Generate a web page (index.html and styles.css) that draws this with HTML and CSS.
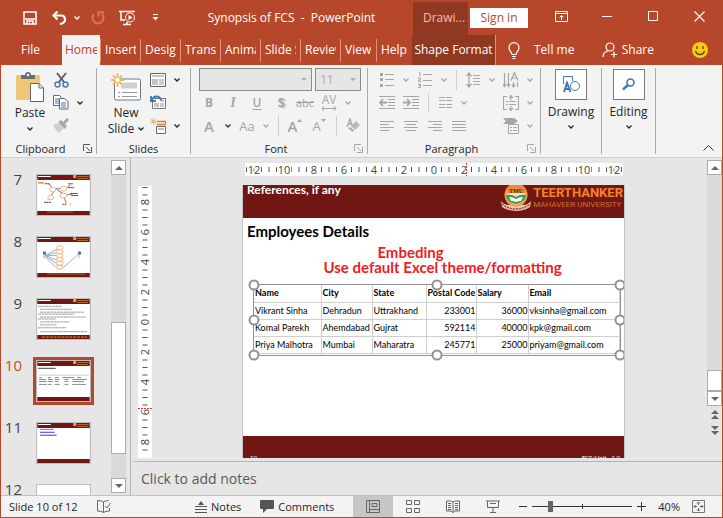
FILE: index.html
```html
<!DOCTYPE html>
<html lang="en">
<head>
<meta charset="utf-8">
<title>Synopsis of FCS - PowerPoint</title>
<link rel="stylesheet" href="styles.css">
</head>
<body>
<svg class="defs" width="0" height="0" aria-hidden="true">
  <symbol id="chev" viewBox="0 0 6 4"><path d="M.5.5 3 3 5.5.5" fill="none" stroke="currentColor" stroke-width="1.300"/></symbol>
  <symbol id="launch" viewBox="0 0 9 9"><path d="M.5 7V.5H7M3 3l4 4M8.500 3v5.500H3" fill="none" stroke="currentColor"/></symbol>
  <symbol id="crest" viewBox="0 0 32 26">
    <path d="M1 16q3 4 8 4h14q5 0 8-4l-1 6q-6 4-14 4T2 22z" fill="#e9c9b5"/>
    <path d="M2 19q6 5 14 5t14-5" fill="none" stroke="#a3392c" stroke-width="1.500" stroke-dasharray="2 1"/>
    <circle cx="16" cy="10" r="11.500" fill="#f3a13c"/>
    <circle cx="16" cy="10" r="9.500" fill="#f4dfca"/>
    <path d="M6 8a10 10 0 0 1 20 0z" fill="#ef8a3c"/>
    <path d="M6 10q6-1 10 2 4-3 10-2-1 8-10 9Q7 18 6 10z" fill="#3f9a4a"/>
    <path d="M9 12q4 0 7 2 3-2 7-2l-2 4q-3 0-5 1-2-1-5-1z" fill="#fff"/>
  </symbol>
  <symbol id="mini" viewBox="0 0 54 41">
    <path fill="#fff" d="M0 0h54v41H0z"/><path fill="#701613" d="M0 0h54v5H0zM0 37h54v4H0z"/>
    <path fill="#fff" d="M1 1h13v1H1z"/><path fill="#e9a15a" d="M37 0h3v3h-3z"/><path fill="#b5652c" d="M41 1h12v1H41zM41 3h11v1H41z"/>
  </symbol>
</svg>

<div class="window">
<header class="titlebar">
  <div class="quick">
    <button class="q-save" aria-label="Save"><svg width="14" height="14" viewBox="0 0 14 14"><path d="M1 1h12v12H1zM2 8h10M4 13v-3h6v3" fill="none" stroke="#fff" stroke-width="1.600"/><path d="M6 11h1v2H6z" fill="#fff"/></svg></button>
    <button class="q-undo" aria-label="Undo"><svg width="15" height="14" viewBox="0 0 15 14"><path d="M5.500.5 1.500 4.500l4 4M2 4.500h7q4 0 4 4 0 3.500-5 4.500" fill="none" stroke="#fff" stroke-width="2.200"/></svg></button>
    <button class="q-chev" aria-label="Undo options"><svg width="6" height="4"><use href="#chev"/></svg></button>
    <button class="q-redo" aria-label="Repeat"><svg width="14" height="14" viewBox="0 0 14 14"><path d="M3 3.200A5.500 5.500 0 1 0 11 3.200M7.500 5.500V1.200H13" fill="none" stroke="#dc7459" stroke-width="2"/></svg></button>
    <button class="q-show" aria-label="Start from beginning"><svg width="17" height="16" viewBox="0 0 17 16"><path d="M0 1.500h16M2 2v8h4M4 14.500h8M8 12v2" fill="none" stroke="#fff" stroke-width="1.500"/><circle cx="11" cy="7.500" r="4.500" fill="#b7472a" stroke="#fff"/><path d="M9.500 5v5l4-2.500z" fill="#fff"/></svg></button>
    <button class="q-more" aria-label="Customize toolbar"><svg width="7" height="7" viewBox="0 0 7 7"><path d="M1 .5h5" stroke="#fff"/><path d="M.5 3h6L3.500 6.500z" fill="#fff"/></svg></button>
  </div>
  <h1 class="doc">Synopsis of FCS&nbsp; -&nbsp; PowerPoint</h1>
  <span class="context">Drawi...</span>
  <button class="signin">Sign in</button>
  <div class="winbtns">
    <button aria-label="Ribbon display options"><svg width="13" height="11" viewBox="0 0 13 11"><path d="M.5.5h12v10H.5zM.5 2.500h12M6.500 9V4.500M4.500 6.500l2-2 2 2" fill="none" stroke="#fff"/></svg></button>
    <button aria-label="Minimize"><svg width="10" height="10"><path d="M0 5.500h10" stroke="#fff"/></svg></button>
    <button aria-label="Maximize"><svg width="10" height="10"><path d="M.5.5h9v9h-9z" fill="none" stroke="#fff"/></svg></button>
    <button aria-label="Close"><svg width="11" height="11"><path d="M.5.5l10 10M10.500.5l-10 10" stroke="#fff" stroke-width="1.200"/></svg></button>
  </div>
</header>

<nav class="tabs">
  <button class="tab file"><span>File</span></button>
  <button class="tab home"><span>Home</span></button>
  <button class="tab"><span>Insert</span></button>
  <button class="tab"><span>Design</span></button>
  <button class="tab"><span>Transitions</span></button>
  <button class="tab"><span>Animations</span></button>
  <button class="tab"><span>Slide Show</span></button>
  <button class="tab"><span>Review</span></button>
  <button class="tab short"><span>View</span></button>
  <button class="tab short"><span>Help</span></button>
  <button class="tab shape"><span>Shape Format</span></button>
  <button class="tell"><svg width="12" height="17" viewBox="0 0 12 17"><path d="M4 12.500C4 10 1 9 1 5.700a5 5 0 0 1 10 0C11 9 8 10 8 12.500zM4 14.500h4M4.500 16.500h3" fill="none" stroke="#fff" stroke-width="1.200"/></svg>Tell me</button>
  <button class="share"><svg width="16" height="16" viewBox="0 0 16 16"><circle cx="8" cy="5" r="4" fill="none" stroke="#fff" stroke-width="1.200"/><path d="M1 15q0-5 5-6M9 12.500h6M12 9.500v6" fill="none" stroke="#fff" stroke-width="1.200"/></svg>Share</button>
  <button class="smile" aria-label="Feedback"><svg width="16" height="16" viewBox="0 0 16 16"><circle cx="8" cy="8" r="8" fill="#fbcb0e"/><path d="M5 4v3M11 4v3M3.500 9q1 3.500 4.500 3.500T12.500 9" fill="none" stroke="#4d4a2a" stroke-width="1.400"/></svg></button>
</nav>

<section class="ribbon">
  <div class="group clip">
    <div class="tools">
      <button class="big">
        <svg width="28" height="31" viewBox="0 0 28 31"><path d="M0 3h24v25H0z" fill="#eec878"/><path d="M5 7V3h4q0-3 3-3t3 3h4v4z" fill="#6d6d6d"/><circle cx="12" cy="3" r="1.200" fill="#fff"/><path d="M14.500 11.500H23l4.500 4.500v13.500h-13z" fill="#fff" stroke="#666"/><path d="M23 11.500V16h4.500" fill="none" stroke="#666"/></svg>
        <span>Paste</span><svg width="6" height="4"><use href="#chev"/></svg>
      </button>
      <div class="rows">
        <div class="row"><button aria-label="Cut"><svg width="15" height="16" viewBox="0 0 15 16"><path d="M3 1l7 9M12 1 5 10" stroke="#606060" stroke-width="2"/><circle cx="3.500" cy="12.500" r="2.500" fill="none" stroke="#3d79b9" stroke-width="1.400"/><circle cx="11.500" cy="12.500" r="2.500" fill="none" stroke="#3d79b9" stroke-width="1.400"/></svg></button></div>
        <div class="row"><button aria-label="Copy"><svg width="16" height="15" viewBox="0 0 16 15"><path d="M.5.5h6l2 2v8h-8z" fill="#fff" stroke="#666"/><path d="M2 4h4M2 6h4M2 8h4" stroke="#3d79b9"/><path d="M6.500 3.500h5l3.500 3v7.500H6.500z" fill="#fff" stroke="#666"/><path d="M8 8h5M8 10h5M8 12h5" stroke="#3d79b9"/></svg></button><button class="c" aria-label="Copy options"><svg width="6" height="4"><use href="#chev"/></svg></button></div>
        <div class="row"><button aria-label="Format Painter"><svg width="16" height="15" viewBox="0 0 16 15"><path d="M0 7l6-2 5 5-5 5q-4-3-6-8z" fill="#d0d0d0"/><path d="M5 4l3-2 6 6-2 3zM10 4l4-4 2 2-4 4z" fill="#a8a8a8"/></svg></button></div>
      </div>
    </div>
    <h2>Clipboard</h2><button class="launch" aria-label="Clipboard pane"><svg width="9" height="9"><use href="#launch"/></svg></button>
  </div>

  <div class="group slides">
    <div class="tools">
      <button class="big">
        <svg width="30" height="28" viewBox="0 0 30 28"><rect x="3.500" y="5.500" width="26" height="21" rx="1.500" fill="#fff" stroke="#777"/><path d="M13 9h13v6H10v-4z" fill="#d0d0d0"/><path d="M7 19h2M11 19h15M7 23h2M11 23h15" stroke="#999"/><path d="M6.500 0v13M0 6.500h13M2 2l9 9M11 2l-9 9" stroke="#edb95b" stroke-width="2"/><circle cx="6.500" cy="6.500" r="2.200" fill="#fff"/></svg>
        <span>New</span><span class="inline">Slide <svg width="6" height="4"><use href="#chev"/></svg></span>
      </button>
      <div class="rows">
        <div class="row"><button aria-label="Layout"><svg width="16" height="14" viewBox="0 0 16 14"><path d="M.5.5h15v13H.5z" fill="#fff" stroke="#666"/><path d="M2 2h12v2H2zM2 6h6v6H2z" fill="#c4c4c4"/><path d="M9 7h5M9 9h5M9 11h5" stroke="#999"/></svg></button><button class="c" aria-label="Layout options"><svg width="6" height="4"><use href="#chev"/></svg></button></div>
        <div class="row"><button aria-label="Reset"><svg width="16" height="15" viewBox="0 0 16 15"><path d="M2.500 3.500h13v10h-13z" fill="#fff" stroke="#777"/><path d="M4 8h5v4H4zM11 5h3v2h-3z" fill="#c4c4c4"/><path d="M10 9h4M10 11h4" stroke="#999"/><path d="M1 1v5h5M1.500 5.500q2-4 5-4t5 4" fill="none" stroke="#3d79b9" stroke-width="1.800"/></svg></button></div>
        <div class="row"><button aria-label="Section"><svg width="16" height="16" viewBox="0 0 16 16"><path d="M7 3.500h8.500v3H7" fill="none" stroke="#e07c2c" stroke-width="1.300"/><path d="M6.500 8.500h9v7h-9z" fill="#fff" stroke="#666"/><path d="M8 10h6v2H8z" fill="#bbb"/><path d="M3.500 0v7M0 3.500h7M1 1l5 5M6 1 1 6" stroke="#edb95b"/></svg></button><button class="c" aria-label="Section options"><svg width="6" height="4"><use href="#chev"/></svg></button></div>
      </div>
    </div>
    <h2>Slides</h2>
  </div>

  <div class="group font">
    <div class="rows off">
      <div class="row combos"><select class="face" aria-label="Font"><option></option></select><select class="size" aria-label="Font size"><option>11</option></select></div>
      <div class="row">
        <button><b>B</b></button><button><i>I</i></button><button><u>U</u></button><button class="shadow"><b>S</b></button><button class="strike"><s>abc</s></button>
        <button class="av" aria-label="Character spacing">AV<svg width="16" height="5" viewBox="0 0 16 5"><path d="M3 0 1 2.500 3 5M13 0l2 2.500L13 5M1 2.500h14" fill="none" stroke="currentColor"/></svg></button><button class="c" aria-label="Spacing options"><svg width="6" height="4"><use href="#chev"/></svg></button>
      </div>
      <div class="row">
        <button class="fa">A</button><button class="c dark" aria-label="Font color options"><svg width="6" height="4"><use href="#chev"/></svg></button><button class="fb">Aa</button><button class="c" aria-label="Case options"><svg width="6" height="4"><use href="#chev"/></svg></button><i class="bar"></i>
        <button class="fa" aria-label="Increase font size">A<svg class="sup" width="5" height="3"><path d="M0 3h5L2.500 0z" fill="currentColor"/></svg></button><button class="fb" aria-label="Decrease font size">A<svg class="sup" width="5" height="3"><path d="M0 0h5L2.500 3z" fill="currentColor"/></svg></button><i class="bar"></i>
        <button class="clear" aria-label="Clear formatting"><svg width="15" height="15" viewBox="0 0 15 15"><path d="M1 9l3-8 3 8M2 6h4" fill="none" stroke="currentColor" stroke-width="1.300"/><path d="M10 3l4 4-5 5-4-4z" fill="#bbb"/><path d="M4.500 9l3.500 3.500L6.500 14 2 10z" fill="#a9a9a9"/></svg></button>
      </div>
    </div>
    <h2>Font</h2><button class="launch off" aria-label="Font dialog"><svg width="9" height="9"><use href="#launch"/></svg></button>
  </div>

  <div class="group para">
    <div class="tools off">
      <div class="rows">
        <div class="row">
          <button aria-label="Bullets"><svg width="14" height="15" viewBox="0 0 14 15"><path d="M0 1h3v3H0zM0 6h3v3H0zM0 12h3v3H0z" fill="currentColor"/><path d="M5 2.500h9M5 7.500h9M5 13.500h9" stroke="currentColor"/></svg></button><button class="c" aria-label="Bullet options"><svg width="6" height="4"><use href="#chev"/></svg></button>
          <button aria-label="Numbering"><svg width="14" height="16" viewBox="0 0 14 16"><path d="M1 .5h1V4M0 6h2.500v2H.5v1.500H3M0 12h2.500v3.500H0M.5 13.500h2" fill="none" stroke="currentColor"/><path d="M5 2.500h9M5 8.500h9M5 13.500h9" stroke="currentColor"/></svg></button><button class="c" aria-label="Numbering options"><svg width="6" height="4"><use href="#chev"/></svg></button><i class="bar"></i>
          <button aria-label="Line spacing"><svg width="14" height="16" viewBox="0 0 14 16"><path d="M3 1v14M.5 4 3 1l2.500 3M.5 12 3 15l2.500-3" fill="none" stroke="currentColor" stroke-width="1.300"/><path d="M7 3.500h7M7 6.500h7M7 9.500h7M7 12.500h7" stroke="currentColor"/></svg></button><button class="c" aria-label="Line spacing options"><svg width="6" height="4"><use href="#chev"/></svg></button>
        </div>
        <div class="row">
          <button aria-label="Decrease indent"><svg width="16" height="13" viewBox="0 0 16 13"><path d="M0 .5h16M0 12.500h16M9 3.500h7M9 6.500h7M9 9.500h7" stroke="currentColor"/><path d="M8 6.500H1M4 3 1 6.500 4 10" fill="none" stroke="currentColor" stroke-width="1.800"/></svg></button>
          <button aria-label="Increase indent"><svg width="16" height="13" viewBox="0 0 16 13"><path d="M0 .5h16M0 12.500h16M9 3.500h7M9 6.500h7M9 9.500h7" stroke="currentColor"/><path d="M0 6.500h7M4 3l3 3.500L4 10" fill="none" stroke="currentColor" stroke-width="1.800"/></svg></button><i class="bar"></i>
          <button aria-label="Columns"><svg width="13" height="11" viewBox="0 0 13 11"><path d="M0 .5h6M0 3.500h6M0 7.500h6M0 10.500h6M7 .5h6M7 3.500h6M7 7.500h6M7 10.500h6" stroke="currentColor"/></svg></button><button class="c" aria-label="Column options"><svg width="6" height="4"><use href="#chev"/></svg></button>
        </div>
        <div class="row">
          <button aria-label="Align left"><svg width="14" height="10"><path d="M0 .5h14M0 3.500h9M0 6.500h14M0 9.500h9" stroke="currentColor"/></svg></button>
          <button aria-label="Center"><svg width="14" height="10"><path d="M0 .5h14M2 3.500h10M0 6.500h14M2 9.500h10" stroke="currentColor"/></svg></button>
          <button aria-label="Align right"><svg width="14" height="10"><path d="M0 .5h14M5 3.500h9M0 6.500h14M5 9.500h9" stroke="currentColor"/></svg></button>
          <button aria-label="Justify"><svg width="14" height="10"><path d="M0 .5h14M0 3.500h14M0 6.500h14M0 9.500h14" stroke="currentColor"/></svg></button>
        </div>
      </div>
      <div class="rows end">
        <div class="row"><button aria-label="Text direction"><svg width="16" height="16" viewBox="0 0 16 16"><path d="M1.500 1v13M5.500 1v13M0 12l1.500 2.500L3 12M4 12l1.500 2.500L7 12M10.500 10v5M14.500 10v5M9 12.500l1.500 2.500 1.500-2.500M8 8.500l3.500-8 3.500 8M9 6h5" fill="none" stroke="currentColor" stroke-width="1.200"/></svg></button><button class="c" aria-label="Direction options"><svg width="6" height="4"><use href="#chev"/></svg></button></div>
        <div class="row"><button aria-label="Align text"><svg width="16" height="16" viewBox="0 0 16 16"><path d="M4 1.500H.5v13H4M12 1.500h3.500v13H12M8 0v5M6 3l2-2.500L10 3M8 11v5M6 13l2 2.500 2-2.500" fill="none" stroke="currentColor" stroke-width="1.200"/><path d="M3 6.500h2M6 6.500h7M3 9.500h2M6 9.500h7" stroke="currentColor"/></svg></button><button class="c" aria-label="Align options"><svg width="6" height="4"><use href="#chev"/></svg></button></div>
        <div class="row"><button aria-label="Convert to SmartArt"><svg width="16" height="16" viewBox="0 0 16 16"><path d="M0 0h11l4 3-4 3H0l3-3z" fill="currentColor"/><path d="M5.500 6.500h10v9h-10z" fill="#f3f3f3" stroke="currentColor"/><path d="M7 9.500h2M10 9.500h4M7 12.500h2M10 12.500h4" stroke="currentColor"/></svg></button><button class="c" aria-label="SmartArt options"><svg width="6" height="4"><use href="#chev"/></svg></button></div>
      </div>
    </div>
    <h2>Paragraph</h2><button class="launch off" aria-label="Paragraph dialog"><svg width="9" height="9"><use href="#launch"/></svg></button>
  </div>

  <div class="group drawing"><button class="tile"><span class="box"><svg width="17" height="17" viewBox="0 0 17 17"><path d="M.5 8V.5h9V5" fill="none" stroke="#3d79b9"/><circle cx="12" cy="10" r="4.500" fill="#fff" stroke="#3d79b9"/><path d="M1 16 4 7l3.500 9M2 13h5" fill="none" stroke="#3d79b9" stroke-width="2"/></svg></span><span>Drawing</span><svg width="6" height="4"><use href="#chev"/></svg></button></div>
  <div class="group editing"><button class="tile"><span class="box"><svg width="13" height="13" viewBox="0 0 13 13"><circle cx="8.500" cy="4.500" r="3.500" fill="none" stroke="#3d79b9" stroke-width="1.600"/><path d="M6 7l-5 4.500" stroke="#3d79b9" stroke-width="2.400"/></svg></span><span>Editing</span><svg width="6" height="4"><use href="#chev"/></svg></button></div>
  <button class="collapse" aria-label="Collapse the ribbon"><svg width="11" height="6"><path d="M.5 5.500l5-5 5 5" fill="none" stroke="#333"/></svg></button>
</section>

<main class="work">
  <aside class="panel">
    <ol class="list">
      <li><span>7</span><button class="thumb" aria-label="Slide 7"><svg viewBox="0 0 54 41"><use href="#mini"/><path d="M10 38h27" stroke="#a56a1c"/><path d="M12 9l4 5M18 16l-7 9M20 15l8 5M18 14h8M28 15l6-5M29 21l8-2M27 22l3 7" stroke="#777" fill="none"/><path d="M8 9h5M32 9h5M32 13h6M34 19h8M35 21h7M7 28h7M26 30h4" stroke="#333" stroke-dasharray="2 .5"/><path d="M1 8h6" stroke="#ef9a55" stroke-width="2"/><g fill="#fff" stroke="#f2b080"><ellipse cx="16" cy="15" rx="3" ry="2.500"/><ellipse cx="14" cy="23" rx="3" ry="2.500"/><ellipse cx="27" cy="14" rx="3.500" ry="2.500"/><ellipse cx="27" cy="21" rx="3.500" ry="2.500"/></g><path d="M34 29v2" stroke="#ef9a55"/></svg></button></li>
      <li><span>8</span><button class="thumb" aria-label="Slide 8"><svg viewBox="0 0 54 41"><use href="#mini"/><path d="M10 38h40" stroke="#a56a1c"/><path d="M8 19l13-7M8 19h13M8 19l13 5M8 19l13 9M8 20l11 11M8 19l12-3M43 17 27 31" stroke="#8fb2da" fill="none"/><path d="M7 14v8M43 14v8" stroke="#a9bdd2"/><path d="M6 15h3v3H6zM42 15h3v3h-3z" fill="#3c72b0"/><g fill="#fff" stroke="#f2b080"><ellipse cx="23" cy="11" rx="3.500" ry="2"/><ellipse cx="23" cy="15" rx="3.500" ry="2"/><ellipse cx="23" cy="19" rx="3.500" ry="2"/><ellipse cx="23" cy="23" rx="3.500" ry="2"/><ellipse cx="23" cy="27" rx="3.500" ry="2"/><ellipse cx="23" cy="31" rx="3.500" ry="2"/></g></svg></button></li>
      <li><span>9</span><button class="thumb" aria-label="Slide 9"><svg viewBox="0 0 54 41"><use href="#mini"/><path d="M1 7.500h24M3 10.500h33M3 13.500h45M1 15.500h37M3 18.500h47M1 20.500h18M3 23.500h30M3 26.500h17M1 29.500h29M3 33.500h48" stroke="#999" stroke-dasharray="3 .5"/><path d="M5 39h46" stroke="#d2a01c" stroke-dasharray="3 1"/></svg></button></li>
      <li class="current"><span>10</span><button class="thumb" aria-label="Slide 10" aria-current="true"><svg viewBox="0 0 54 41"><use href="#mini"/><path d="M1 7.500h18" stroke="#444"/><path d="M2 14.500h51" stroke="#ccc"/><path d="M2 17h3M11 17h3M18 17h4M26 17h12M41 17h4M2 19h7M11 19h5M18 19h5M28 19h4M36 19h15M2 21h8M11 21h5M18 21h4M28 21h4M36 21h12M2 24h8M11 24h4M18 24h5M28 24h4M36 24h14" stroke="#888"/></svg></button></li>
      <li><span>11</span><button class="thumb" aria-label="Slide 11"><svg viewBox="0 0 54 41"><use href="#mini"/><path d="M3 6.500h14" stroke="#777"/><path d="M3 9.500h15M3 12.500h17" stroke="#33e"/></svg></button></li>
      <li><span>12</span><button class="thumb" aria-label="Slide 12"><svg viewBox="0 0 54 41"><path fill="#fff" d="M0 0h54v41H0z"/></svg></button></li>
    </ol>
    <div class="scroll"><button class="arrow" aria-label="Scroll up"><svg width="8" height="4"><path d="M0 4h8L4 0z" fill="#666"/></svg></button><i class="track before"></i><i class="grip"></i><i class="track after"></i><button class="arrow" aria-label="Scroll down"><svg width="8" height="4"><path d="M0 0h8L4 4z" fill="#666"/></svg></button></div>
  </aside>

  <div class="editor">
    <div class="stage">
      <div class="vruler"><svg width="14" height="272" viewBox="0 0 14 272"><path d="M7 1v270" stroke="#555" stroke-width="5" stroke-dasharray="1 6.500"/><g class="vnum"><text transform="translate(11 16) rotate(-90)">8</text><text transform="translate(11 46) rotate(-90)">6</text><text transform="translate(11 76) rotate(-90)">4</text><text transform="translate(11 106) rotate(-90)">2</text><text transform="translate(11 136) rotate(-90)">0</text><text transform="translate(11 166) rotate(-90)">2</text><text transform="translate(11 196) rotate(-90)">4</text><text transform="translate(11 226) rotate(-90)">6</text><text transform="translate(11 256) rotate(-90)">8</text></g><path d="M0 222.500h14" stroke="#e5402a" stroke-dasharray="2 1"/></svg></div>
      <div class="canvas">
        <div class="hruler"><svg width="378" height="13" viewBox="0 0 378 13"><path d="M1 6.500h376" stroke="#555" stroke-width="5" stroke-dasharray="1 6.500"/><g class="hnum"><text x="9" y="11">12</text><text x="39" y="11">10</text><text x="69" y="11">8</text><text x="99" y="11">6</text><text x="129" y="11">4</text><text x="159" y="11">2</text><text x="189" y="11">0</text><text x="219" y="11">2</text><text x="249" y="11">4</text><text x="279" y="11">6</text><text x="309" y="11">8</text><text x="339" y="11">10</text><text x="369" y="11">12</text></g><path d="M221.500 0v13" stroke="#e5402a" stroke-dasharray="2 1"/></svg></div>
        <article class="slide">
          <header class="band"><span>References, if any</span>
            <div class="brand"><svg width="32" height="26" viewBox="0 0 32 26"><use href="#crest"/><text x="16" y="8" class="tmu">TMU</text></svg><div><strong>TEERTHANKER</strong><span>MAHAVEER UNIVERSITY</span></div></div>
          </header>
          <h3>Employees Details</h3>
          <p class="red lead">Embeding</p>
          <p class="red">Use default Excel theme/formatting</p>
          <div class="object">
            <table>
              <colgroup><col class="c1"><col class="c2"><col class="c3"><col class="c4"><col class="c5"><col class="c6"></colgroup>
              <thead><tr><th>Name</th><th>City</th><th>State</th><th>Postal Code</th><th>Salary</th><th>Email</th></tr></thead>
              <tbody>
                <tr><td>Vikrant Sinha</td><td>Dehradun</td><td>Uttrakhand</td><td class="n">233001</td><td class="n">36000</td><td>vksinha@gmail.com</td></tr>
                <tr><td>Komal Parekh</td><td>Ahemdabad</td><td>Gujrat</td><td class="n">592114</td><td class="n">40000</td><td>kpk@gmail.com</td></tr>
                <tr><td>Priya Malhotra</td><td>Mumbai</td><td>Maharatra</td><td class="n">245771</td><td class="n">25000</td><td>priyam@gmail.com</td></tr>
              </tbody>
            </table>
            <i class="h tl"></i><i class="h tc"></i><i class="h tr"></i><i class="h ml"></i><i class="h mr"></i><i class="h bl"></i><i class="h bc"></i><i class="h br"></i>
          </div>
          <footer class="foot"><span>10</span><span>FCS/Unit - 1.0</span></footer>
        </article>
      </div>
      <div class="scroll right"><button class="arrow" aria-label="Scroll up"><svg width="8" height="4"><path d="M0 4h8L4 0z" fill="#666"/></svg></button><i class="track"></i><i class="grip"></i><button class="arrow" aria-label="Scroll down"><svg width="8" height="4"><path d="M0 0h8L4 4z" fill="#666"/></svg></button><button class="jump" aria-label="Previous slide"><svg width="8" height="9"><path d="M0 4h8L4 0zM0 9h8L4 5z" fill="#666"/></svg></button><button class="jump" aria-label="Next slide"><svg width="8" height="9"><path d="M0 0h8L4 4zM0 5h8L4 9z" fill="#666"/></svg></button></div>
    </div>
    <textarea class="notes" aria-label="Notes" placeholder="Click to add notes"></textarea>
  </div>
</main>

<footer class="status">
  <span class="where">Slide 10 of 12</span>
  <button class="spell" aria-label="Spelling"><svg width="14" height="13" viewBox="0 0 14 13"><path d="M6.500 2v10.500q-2-1.500-6-1.500V.5q4 0 6 1.500 2-1.500 5-1.500M6.500 12.500q2-1.500 6-1.500V8M8 6l2 2 3.500-5" fill="none" stroke="#666"/></svg></button>
  <button class="txt"><svg width="12" height="12" viewBox="0 0 12 12"><path d="M3 4h6L6 0zM0 5h12v1H0zM0 8h12v1H0zM0 11h12v1H0z" fill="#555"/></svg>Notes</button>
  <button class="txt comments"><svg width="14" height="13" viewBox="0 0 14 13"><path d="M1 0h12q1 0 1 1v7q0 1-1 1H7l-4 4V9H1Q0 9 0 8V1q0-1 1-1z" fill="#555"/></svg>Comments</button>
  <button class="view on" aria-label="Normal"><svg width="14" height="13" viewBox="0 0 14 13"><path d="M.5.5h13v12H.5zM3.500.5v12M3.500 9.500h10M6 3.500h5v3H6z" fill="none" stroke="#666"/></svg></button>
  <button class="view" aria-label="Slide Sorter"><svg width="14" height="13" viewBox="0 0 14 13"><path d="M.5.5h5v4h-5zM8.500.5h5v4h-5zM.5 8.500h5v4h-5zM8.500 8.500h5v4h-5z" fill="none" stroke="#666"/></svg></button>
  <button class="view" aria-label="Reading View"><svg width="14" height="13" viewBox="0 0 14 13"><path d="M7 2v10.500M.5 1h4L7 2l2.500-1h4v10H9L7 12.500 5 11H.5zM2 3.500h3M2 5.500h3M2 7.500h3M2 9.500h3M9 3.500h3M9 5.500h3M9 7.500h3M9 9.500h3" fill="none" stroke="#666"/></svg></button>
  <button class="view" aria-label="Slide Show"><svg width="14" height="13" viewBox="0 0 14 13"><path d="M0 1h14M1.500 1v6.500h11V1M4 3.500h6M7 8v4M4 12.500h6" fill="none" stroke="#666"/></svg></button>
  <div class="zoom"><button aria-label="Zoom out"><svg width="8" height="9"><path d="M0 4.500h8" stroke="#333"/></svg></button><input type="range" min="0" max="100" value="17" aria-label="Zoom"><button aria-label="Zoom in"><svg width="9" height="9"><path d="M0 4.500h9M4.500 0v9" stroke="#333"/></svg></button></div>
  <button class="pct">40%</button>
  <button class="fit" aria-label="Fit slide"><svg width="13" height="13" viewBox="0 0 13 13"><path d="M.5.5h12v12H.5z" fill="none" stroke="#777"/><path d="M6.500 2v3M6.500 8v3M2 6.500h3M8 6.500h3M5 3.500l1.500-1.500L8 3.500M5 9.500 6.500 11 8 9.500M3.500 5 2 6.500 3.500 8M9.500 5 11 6.500 9.500 8" fill="none" stroke="#666"/></svg></button>
</footer>
</div>
</body>
</html>
```

FILE: styles.css
```css
:root {
  --accent: #b7472a;
  --deep: #8f3822;
  --maroon: #701613;
  --ribbon: #f3f3f3;
  --pane: #e6e6e6;
  --line: #ababab;
  --ui: "Open Sans", "Noto Sans", sans-serif;
  --slide: Lato, "Open Sans", sans-serif;
}

* { box-sizing: border-box; }

body {
  margin: 0;
  font: 12px/16px var(--ui);
  color: #262626;
}

.defs { position: absolute; }
svg { display: block; flex: none; }

button, select, textarea {
  font: inherit;
  color: inherit;
  border: 0;
  padding: 0;
  margin: 0;
  background: none;
  border-radius: 0;
}

button {
  display: flex;
  align-items: center;
  justify-content: center;
  white-space: nowrap;
}

.window {
  display: flex;
  flex-direction: column;
  height: 100vh;
  overflow: hidden;
  border: 1px solid var(--accent);
  border-top: 0;
  background: var(--pane);
}

/* Title bar */
.titlebar {
  display: flex;
  align-items: center;
  height: 35px;
  flex: none;
  background: var(--accent);
  color: #fff;
}
.quick { display: flex; align-items: center; padding-left: 14px; }
.q-save { width: 30px; }
.q-undo { width: 28px; }
.q-chev { width: 8px; }
.q-redo { width: 34px; }
.q-show { width: 25px; }
.q-more { width: 30px; }
.doc {
  flex: 1;
  margin: 0;
  font-size: 12px;
  font-weight: 400;
  text-align: center;
  white-space: nowrap;
}
.context {
  align-self: stretch;
  width: 55px;
  margin-top: 2px;
  padding: 8px 0 0 10px;
  background: var(--deep);
  color: #f7bfa8;
}
.signin {
  width: 58px;
  height: 20px;
  margin: 0 10px 0 2px;
  background: #fff;
  color: var(--accent);
}
.winbtns { display: flex; padding-bottom: 3px; }
.winbtns button { width: 46px; height: 20px; }

/* Ribbon tabs */
.tabs {
  display: flex;
  align-items: stretch;
  height: 30px;
  flex: none;
  background: var(--accent);
  color: #fff;
}
.tab {
  justify-content: flex-start;
  width: 40px;
  padding: 0 4px 0 5px;
  background: linear-gradient(#e58e78, #e58e78) 0 50% / 1px 23px no-repeat;
}
.tab span { overflow: hidden; }
.tab.file { width: 61px; padding-left: 20px; background: none; }
.tab.home { width: 38px; padding: 0 3px; background: var(--ribbon); color: var(--accent); }
.tab.short { width: 36px; }
.tab.shape { width: 84px; padding: 0; justify-content: center; background: var(--deep); border-right: 1px solid #e58e78; }
.tell { gap: 14px; margin-left: 12px; }
.share { gap: 4px; margin-left: auto; }
.smile { margin: 0 14px 0 38px; }

/* Ribbon */
.ribbon {
  display: flex;
  height: 93px;
  flex: none;
  padding: 3px 0;
  background: var(--ribbon);
  border-bottom: 1px solid #cfcfcf;
}
.group {
  position: relative;
  display: flex;
  flex-direction: column;
  border-right: 1px solid var(--line);
}
.group h2 {
  margin: 4px 0 0;
  font-size: 11px;
  font-weight: 500;
  line-height: 16px;
  text-align: center;
}
.launch { position: absolute; right: 4px; bottom: 1px; color: #555; }
.off { color: #a6a6a6; }
.tools { display: flex; height: 69px; }
.rows { display: flex; flex-direction: column; }
.row { display: flex; align-items: center; height: 23px; }
.row button { width: 24px; height: 22px; }
.row button.c { width: 14px; }
.bar { width: 10px; height: 20px; background: linear-gradient(#cfcfcf, #cfcfcf) 50% 0 / 1px 100% no-repeat; }

.clip { width: 96px; }
.clip h2 { padding-right: 16px; }
.clip .big { width: 38px; margin-left: 10px; }
.slides { width: 94px; }
.slides .big { width: 40px; margin-left: 9px; }
.font { width: 177px; padding-left: 6px; }
.font h2, .para h2 { padding-right: 12px; }
.para { width: 173px; padding-left: 7px; }
.para .end { margin-left: auto; padding-right: 9px; }
.drawing { width: 61px; }
.editing { width: 54px; }

.big {
  flex-direction: column;
  justify-content: flex-start;
  padding-top: 4px;
}
.big > span { margin-top: 2px; }
.big > span + svg { margin-top: 6px; }
.big > svg:first-child { height: 31px; }
.big > .inline { display: flex; align-items: center; gap: 4px; margin: 0; }

.combos { gap: 3px; padding-left: 2px; }
select {
  height: 23px;
  appearance: none;
  padding: 0 4px;
  border: 1px solid #8a8a8a;
  background: url("data:image/svg+xml,%3Csvg xmlns='http://www.w3.org/2000/svg' width='6' height='3'%3E%3Cpath d='M0 0h6L3 3z' fill='%23aaa'/%3E%3C/svg%3E") right 4px center no-repeat var(--pane);
}
.combos select { color: #b9a9ae; }
.face { width: 113px; }
.size { width: 46px; }
.font i:not(.bar) { font-family: "Liberation Serif", serif; font-size: 14px; font-weight: 700; }
.font u { font-weight: 600; text-underline-offset: 2px; }
.shadow { text-shadow: 2px 1px 1px #bbb; }
.strike { font-size: 11px; }
.av { flex-direction: column; line-height: 12px; }
.row .dark { color: #333; }
.fa { font-size: 15px; font-weight: 600; }
.fb { font-size: 13px; }
.sup { align-self: flex-start; margin-top: 4px; }

.tile { flex-direction: column; }
.tile .box {
  display: grid;
  place-items: center;
  width: 32px;
  height: 31px;
  margin: 1px 0 4px;
  border: 1px solid #7a7a7a;
  background: #fff;
}
.tile > svg { margin-top: 5px; }
.collapse { align-self: flex-end; margin: 0 8px 3px auto; }

/* Work area */
.work { display: flex; flex: 1; min-height: 0; }
.panel {
  display: flex;
  width: 130px;
  flex: none;
  justify-content: space-between;
  padding-right: 4px;
  border-right: 1px solid #b4b4b4;
}
.list {
  display: flex;
  flex-direction: column;
  gap: 20px;
  margin: 0;
  padding: 16px 0 0;
  overflow: hidden;
  width: 94px;
  list-style: none;
  font-size: 15px;
}
.list li { display: flex; gap: 14px; height: 42px; flex: none; }
.list span { width: 21px; line-height: 10px; text-align: right; color: #444; }
.thumb { width: 55px; height: 42px; border: 1px solid #bdbdbd; }
.thumb svg { width: 100%; height: 100%; }
.current span { color: #d0492a; }
.current .thumb { outline: 3px solid var(--accent); }

.scroll {
  display: flex;
  flex-direction: column;
  width: 15px;
  padding: 2px 0;
  flex: none;
}
.arrow { height: 15px; flex: none; border: 1px solid var(--line); background: #fff; }
.track { flex: 1; background: #dadada; }
.grip { height: 132px; border: 1px solid var(--line); background: #fff; }
.panel .before { flex: 147; }
.panel .after { flex: 24; }

.editor { display: flex; flex-direction: column; flex: 1; min-width: 0; padding-left: 2px; }
.stage { display: flex; flex: 1; min-height: 0; }
.vruler { padding: 28px 0 0 5px; }
.vruler svg, .hruler svg { background: #fff; }
.hnum, .vnum { font: 11px var(--ui); fill: #444; text-anchor: middle; stroke: #fff; stroke-width: 3px; paint-order: stroke; }
.canvas {
  display: flex;
  flex-direction: column;
  flex: 1;
  min-width: 0;
  padding: 5px 82px 3px 90px;
}
.hruler { padding: 0 0 9px 3px; overflow: hidden; }
.slide {
  display: flex;
  flex-direction: column;
  flex: 1;
  min-height: 0;
  overflow: hidden;
  border: 1px solid #c4c4c4;
  border-width: 0 1px;
  background: #fff;
  font-family: var(--slide);
  color: #000;
}
.band {
  display: flex;
  justify-content: space-between;
  height: 33px;
  padding-left: 4px;
  flex: none;
  background: var(--maroon);
  color: #fff;
  font-size: 12px;
  line-height: 10px;
  font-weight: 700;
}
.brand { display: flex; gap: 1px; padding-right: 1px; }
.brand strong { display: block; color: #f08426; font: 700 13px/16px Roboto, sans-serif; }
.brand span { display: block; color: #d0702a; font: 400 8px/8px Roboto, sans-serif; }
.tmu { font: 700 6px "Liberation Serif", serif; text-anchor: middle; fill: #5a2010; }
.slide h3 { margin: 4px 0 5px 4px; font-size: 15px; line-height: 18px; font-weight: 700; }
.red { margin: 0; padding-left: 18px; text-align: center; color: #ee1c25; font-size: 15px; font-weight: 700; line-height: 15px; }
.lead { padding: 0 46px 0 0; }
.object {
  position: relative;
  margin: 9px 3px 0 10px;
  height: 72px;
  border: 1px solid #929292;
}
table { width: 100%; border-collapse: collapse; table-layout: fixed; font-size: 9px; line-height: 16px; }
th, td { height: 17px; padding: 0 0 0 1px; text-align: left; white-space: nowrap; border: solid #cfcfcf; border-width: 0 1px 1px 0; }
.n { text-align: right; }
.c1 { width: 67px; }
.c2 { width: 51px; }
.c3 { width: 54px; }
.c4 { width: 50px; }
.c5 { width: 52px; }
.h { position: absolute; width: 11px; height: 11px; border: 2px solid #929292; border-radius: 50%; background: #fff; transform: translate(-50%, -50%); }
.tl, .tc, .tr { top: 0; }
.ml, .mr { top: 50%; }
.bl, .bc, .br { top: 100%; }
.tl, .ml, .bl { left: 0; }
.tc, .bc { left: 50%; }
.tr, .mr, .br { left: 100%; }
.foot {
  display: flex;
  justify-content: space-between;
  align-items: flex-start;
  height: 22px;
  flex: none;
  margin-top: auto;
  padding: 19px 4px 0 7px;
  overflow: hidden;
  background: var(--maroon);
  color: #fff;
  font-size: 6px;
  line-height: 6px;
}
.notes {
  height: 34px;
  flex: none;
  padding: 8px 8px 0;
  border-top: 1px solid #b4b4b4;
  font-size: 14px;
  line-height: 18px;
  resize: none;
  overflow: hidden;
}
.notes::placeholder { color: #595959; opacity: 1; }
.right { padding-bottom: 23px; }
.right .grip { height: 21px; }
.jump { height: 16px; }

/* Status bar */
.status {
  display: flex;
  align-items: center;
  height: 22px;
  flex: none;
  background: var(--ribbon);
  border-top: 1px solid #c2c2c2;
  font-size: 11px;
}
.where { width: 96px; padding-left: 8px; white-space: nowrap; }
.spell { margin-right: auto; }
.txt { gap: 4px; font-weight: 500; margin-right: 19px; }
.view { width: 40px; align-self: stretch; }
.on { background: #c6c6c6; }
.zoom { display: flex; align-items: center; gap: 5px; margin-left: 6px; }
.zoom input {
  width: 100px;
  height: 14px;
  margin: 0;
  appearance: none;
  background: linear-gradient(#333, #333) 50% 50% / 100% 1px no-repeat, linear-gradient(#333, #333) 50% 50% / 1px 5px no-repeat;
}
.zoom input::-webkit-slider-thumb { appearance: none; width: 5px; height: 11px; background: #666; }
.pct { margin-left: 12px; }
.fit { margin: 0 17px 0 12px; }
```
